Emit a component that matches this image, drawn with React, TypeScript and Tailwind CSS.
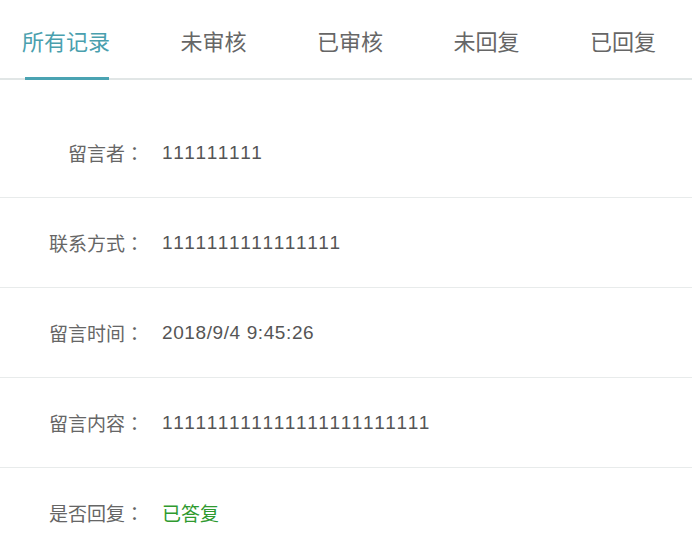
import React from "react";

const tabs = ["所有记录", "未审核", "已审核", "未回复", "已回复"];

const rows: { label: string; value: string; green?: boolean }[] = [
  { label: "留言者", value: "111111111" },
  { label: "联系方式", value: "1111111111111111" },
  { label: "留言时间", value: "2018/9/4 9:45:26" },
  { label: "留言内容", value: "111111111111111111111111" },
  { label: "是否回复", value: "已答复", green: true },
];

export default function App() {
  return (
    <div
      className="w-[692px] h-[545px] overflow-hidden bg-white"
      style={{ fontFamily: '"Liberation Sans", "Noto Sans CJK SC", sans-serif' }}
    >
      <div className="flex h-[80px] border-b-2 border-[#e1e6e6] px-[22px] gap-[70.5px]">
        {tabs.map((t, i) => (
          <div
            key={t}
            className={
              "relative flex items-center pt-[8px] text-[22px] leading-none " +
              (i === 0 ? "text-[#4a9fae]" : "text-[#666666]")
            }
          >
            <span>{t}</span>
            {i === 0 && (
              <div className="absolute bottom-[-2px] left-[3px] w-[84px] h-[3px] bg-[#4aa3b2]" />
            )}
          </div>
        ))}
      </div>
      <div className="pt-[28px]">
        {rows.map((r) => (
          <div
            key={r.label}
            className="flex items-center h-[90px] border-b border-[#e8ebeb]"
          >
            <div className="w-[144px] flex justify-end items-center text-[19px] text-[#666666] leading-none font-['Noto_Sans_CJK_SC',sans-serif]">
              <span>{r.label}</span>
              <span className="inline-block w-[19px] text-center font-['Noto_Sans_CJK_TC',sans-serif]">
                ：
              </span>
            </div>
            <div
              className={
                "ml-[18px] leading-none [font-kerning:none] " +
                (r.green
                  ? "text-[19px] text-[#2f9a2f] font-['Noto_Sans_CJK_SC',sans-serif]"
                  : "text-[19px] tracking-[0.6px] text-[#555555] font-['Liberation_Sans',sans-serif]")
              }
            >
              {r.value}
            </div>
          </div>
        ))}
      </div>
    </div>
  );
}
